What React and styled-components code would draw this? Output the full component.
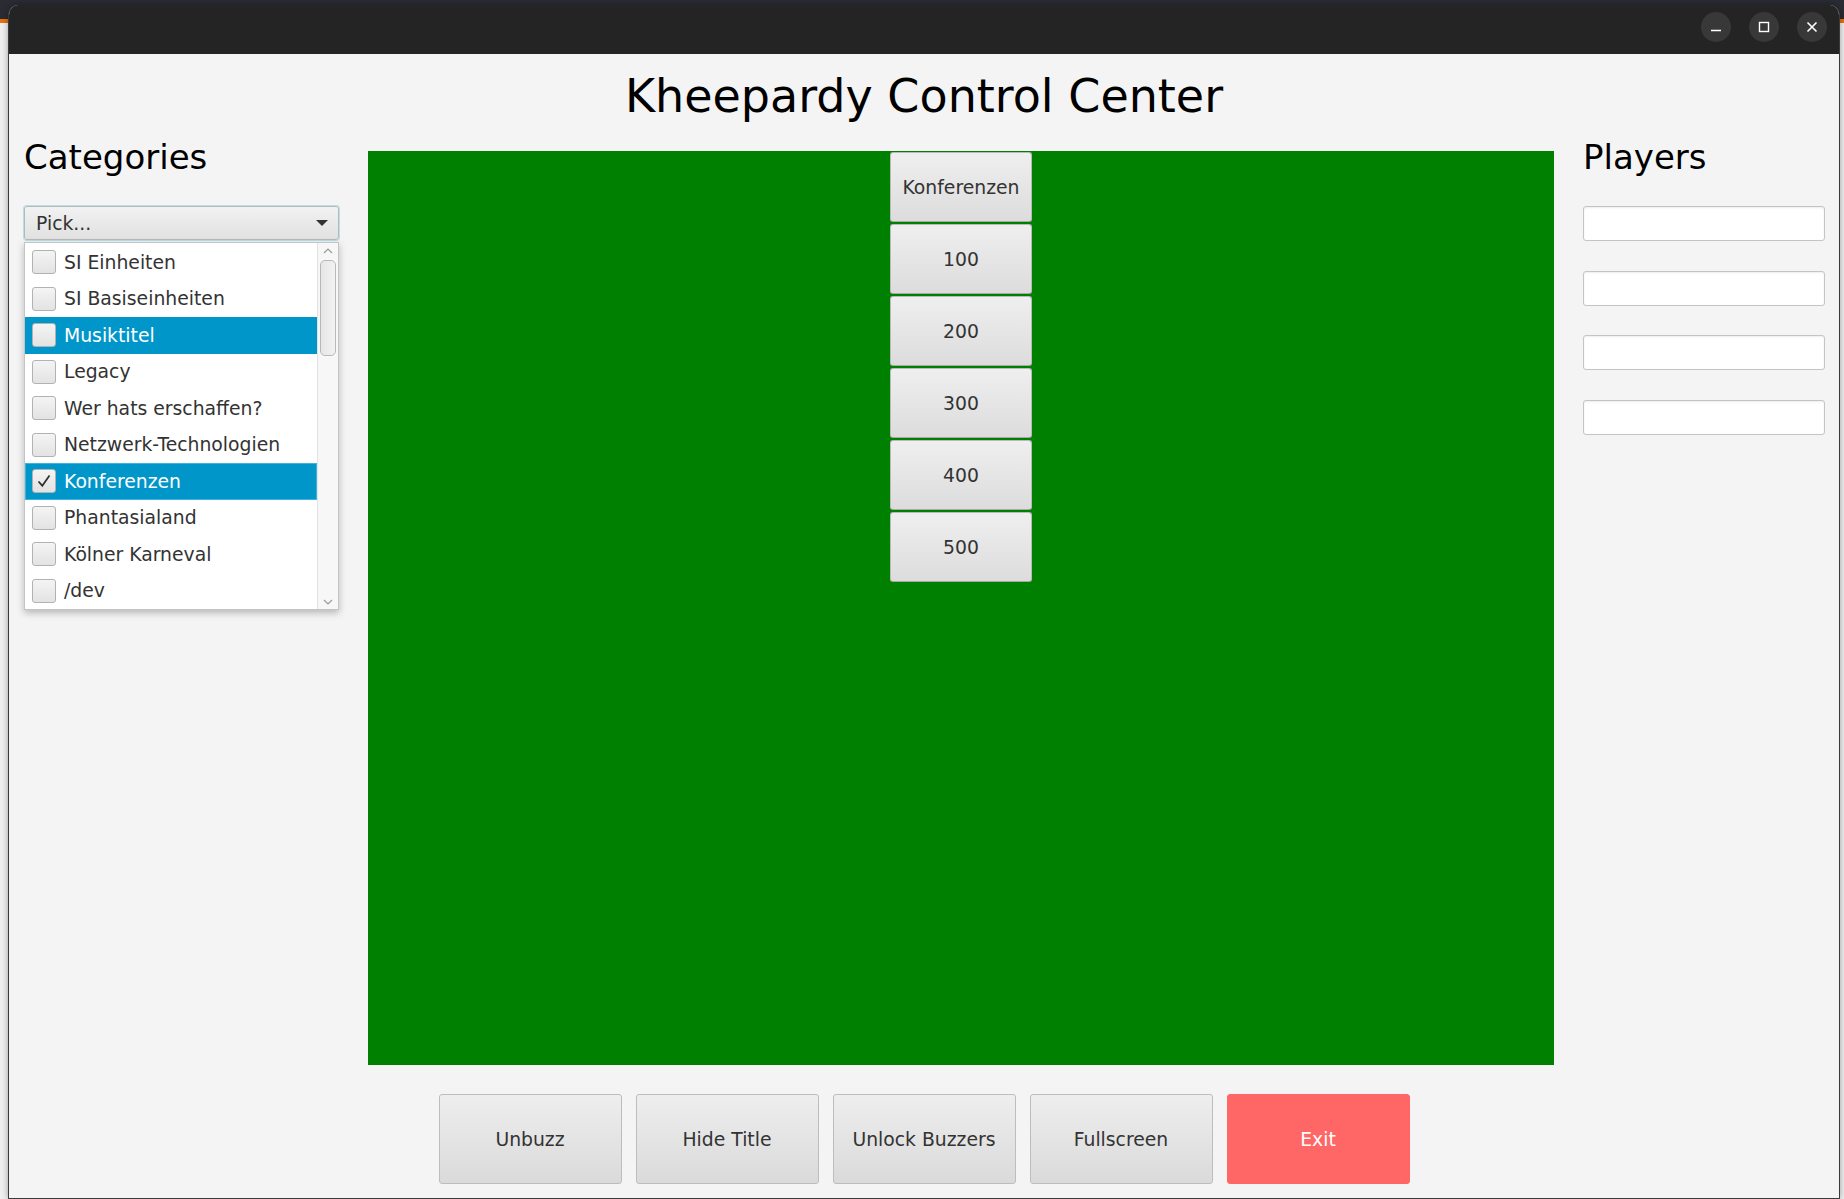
import React from "react";
import styled, { createGlobalStyle } from "styled-components";

const categories = [
    { name: "SI Einheiten" },
    { name: "SI Basiseinheiten" },
    { name: "Musiktitel", selected: true },
    { name: "Legacy" },
    { name: "Wer hats erschaffen?" },
    { name: "Netzwerk-Technologien" },
    { name: "Konferenzen", selected: true, checked: true, focused: true },
    { name: "Phantasialand" },
    { name: "Kölner Karneval" },
    { name: "/dev" },
];

const values = ["Konferenzen", "100", "200", "300", "400", "500"];
const actions = ["Unbuzz", "Hide Title", "Unlock Buzzers", "Fullscreen", "Exit"];

export default function App() {
    return (
        <>
            <GlobalStyle />
            <Window>
                <TitleBar>
                    <WinButton>
                        <svg width="14" height="14" viewBox="0 0 14 14">
                            <path d="M2 10.5h10" stroke="#fff" strokeWidth="1.6" />
                        </svg>
                    </WinButton>
                    <WinButton>
                        <svg width="14" height="14" viewBox="0 0 14 14">
                            <rect x="2.5" y="2.5" width="9" height="9" fill="none" stroke="#fff" strokeWidth="1.4" />
                        </svg>
                    </WinButton>
                    <WinButton>
                        <svg width="14" height="14" viewBox="0 0 14 14">
                            <path d="M2.5 2.5l9 9M11.5 2.5l-9 9" stroke="#fff" strokeWidth="1.6" />
                        </svg>
                    </WinButton>
                </TitleBar>
                <Content>
                    <Title>Kheepardy Control Center</Title>
                    <Body>
                        <Side>
                            <Heading>Categories</Heading>
                            <Combo>
                                <span>Pick...</span>
                                <Arrow />
                            </Combo>
                            <Dropdown>
                                <List>
                                    {categories.map((c) => (
                                        <Row key={c.name} selected={c.selected} focused={c.focused}>
                                            <Check>
                                                {c.checked && (
                                                    <svg width="18" height="18" viewBox="0 0 18 18">
                                                        <path
                                                            d="M3.5 9.5l3.8 4.2L14.5 3.5"
                                                            fill="none"
                                                            stroke="#333"
                                                            strokeWidth="1.8"
                                                        />
                                                    </svg>
                                                )}
                                            </Check>
                                            {c.name}
                                        </Row>
                                    ))}
                                </List>
                                <ScrollBar>
                                    <svg width="12" height="8" viewBox="0 0 12 8">
                                        <path d="M2 6l4-4 4 4" fill="none" stroke="#9a9a9a" strokeWidth="1.2" />
                                    </svg>
                                    <Thumb />
                                    <Track />
                                    <svg width="12" height="8" viewBox="0 0 12 8">
                                        <path d="M2 2l4 4 4-4" fill="none" stroke="#9a9a9a" strokeWidth="1.2" />
                                    </svg>
                                </ScrollBar>
                            </Dropdown>
                        </Side>
                        <Board>
                            <BoardColumn>
                                {values.map((v) => (
                                    <Tile key={v}>{v}</Tile>
                                ))}
                            </BoardColumn>
                        </Board>
                        <Players>
                            <Heading>Players</Heading>
                            <PlayerList>
                                <PlayerInput />
                                <PlayerInput />
                                <PlayerInput />
                                <PlayerInput />
                            </PlayerList>
                        </Players>
                    </Body>
                    <Footer>
                        {actions.map((a) => (
                            <ActionButton key={a} danger={a === "Exit"}>
                                {a}
                            </ActionButton>
                        ))}
                    </Footer>
                </Content>
            </Window>
        </>
    );
}

const GlobalStyle = createGlobalStyle`
    html, body {
        margin: 0;
        padding: 0;
    }
    body {
        width: 1844px;
        height: 1199px;
        overflow: hidden;
        font-family: "DejaVu Sans", "Liberation Sans", sans-serif;
        background: linear-gradient(
            #2b2b33 0 19px,
            #e5720f 19px 23px,
            #efefef 23px
        );
    }
`;

const Window = styled.div`
    margin: 5px 0 0 8px;
    width: 1832px;
    height: 1194px;
    display: flex;
    flex-direction: column;
    box-sizing: border-box;
    border: 1px solid #3a3a3a;
    border-top: none;
    border-radius: 10px 10px 0 0;
    overflow: hidden;
    background: #f4f4f4;
    box-shadow: 0 0 6px rgba(0, 0, 0, 0.35);
`;

const TitleBar = styled.div`
    height: 49px;
    flex: none;
    box-sizing: border-box;
    background: #242424;
    display: flex;
    justify-content: flex-end;
    align-items: flex-start;
    gap: 18px;
    padding: 7px 12px 0 0;
`;

const WinButton = styled.div`
    width: 30px;
    height: 30px;
    border-radius: 50%;
    background: #383838;
    display: flex;
    align-items: center;
    justify-content: center;
`;

const Content = styled.div`
    flex: 1;
    display: flex;
    flex-direction: column;
`;

const Title = styled.h1`
    margin: 15px 0 0;
    text-align: center;
    font-size: 46px;
    line-height: 54px;
    font-weight: normal;
    color: #000;
`;

const Body = styled.div`
    margin-top: 11px;
    display: flex;
    align-items: flex-start;
    padding: 0 14px 0 15px;
`;

const Side = styled.div`
    width: 315px;
    flex: none;
    display: flex;
    flex-direction: column;
`;

const Heading = styled.h2`
    margin: 3px 0 0;
    font-size: 34px;
    line-height: 40px;
    font-weight: normal;
    color: #000;
`;

const Combo = styled.div`
    margin-top: 29px;
    height: 34px;
    box-sizing: border-box;
    border: 1px solid #b8b8b8;
    border-radius: 3px;
    background: linear-gradient(#f2f2f2, #e1e1e1);
    box-shadow: 0 0 0 1px rgba(3, 158, 211, 0.25);
    display: flex;
    align-items: center;
    justify-content: space-between;
    padding: 0 10px 0 11px;
    font-size: 18.8px;
    color: #333;
`;

const Arrow = styled.div`
    width: 0;
    height: 0;
    border-left: 6px solid transparent;
    border-right: 6px solid transparent;
    border-top: 6px solid #333;
`;

const Dropdown = styled.div`
    margin-top: 2px;
    height: 368px;
    box-sizing: border-box;
    border: 1px solid #c4c4c4;
    background: #fff;
    box-shadow: 0 3px 7px rgba(0, 0, 0, 0.25);
    display: flex;
`;

const List = styled.div`
    flex: 1;
    display: flex;
    flex-direction: column;
    padding-top: 1px;
`;

const Row = styled.div`
    height: 36.5px;
    box-sizing: border-box;
    display: flex;
    align-items: center;
    gap: 8px;
    padding-left: 6px;
    font-size: 18.8px;
    color: ${(p) => (p.selected ? "#fff" : "#333")};
    background: ${(p) => (p.selected ? "#0096c9" : "#fff")};
    border: 1px solid ${(p) => (p.focused ? "#3fb3dd" : "transparent")};
`;

const Check = styled.div`
    width: 24px;
    height: 24px;
    box-sizing: border-box;
    border: 1px solid #b2b2b2;
    border-radius: 3px;
    background: linear-gradient(#f4f4f4, #e3e3e3);
    display: flex;
    align-items: center;
    justify-content: center;
`;

const ScrollBar = styled.div`
    width: 21px;
    flex: none;
    box-sizing: border-box;
    border-left: 1px solid #e2e2e2;
    background: #f7f7f7;
    display: flex;
    flex-direction: column;
    align-items: center;
    padding: 4px 0 3px;
    gap: 5px;
`;

const Thumb = styled.div`
    width: 16px;
    height: 96px;
    box-sizing: border-box;
    border: 1px solid #b8b8b8;
    border-radius: 5px;
    background: linear-gradient(90deg, #e6e6e6, #f2f2f2);
`;

const Track = styled.div`
    flex: 1;
`;

const Board = styled.div`
    flex: 1;
    margin: 17px 29px 0 29px;
    height: 914px;
    background: #008000;
    display: flex;
    justify-content: center;
`;

const BoardColumn = styled.div`
    display: flex;
    flex-direction: column;
    gap: 2px;
    margin-top: 1px;
`;

const Tile = styled.div`
    width: 142px;
    height: 70px;
    box-sizing: border-box;
    border: 1px solid #b9b9b9;
    border-bottom-color: #a8a8a8;
    border-radius: 3px;
    background: linear-gradient(#efefef, #dcdcdc);
    display: flex;
    align-items: center;
    justify-content: center;
    font-size: 18.8px;
    color: #333;
`;

const Players = styled.div`
    width: 242px;
    flex: none;
    display: flex;
    flex-direction: column;
`;

const PlayerList = styled.div`
    margin-top: 29px;
    display: flex;
    flex-direction: column;
    gap: 29.7px;
`;

const PlayerInput = styled.div`
    height: 35px;
    box-sizing: border-box;
    border: 1px solid #c4c4c4;
    border-radius: 3px;
    background: #fff;
    box-shadow: inset 0 1px 2px rgba(0, 0, 0, 0.08);
`;

const Footer = styled.div`
    margin-top: 29px;
    display: flex;
    justify-content: center;
    gap: 14px;
`;

const ActionButton = styled.div`
    width: 183px;
    height: 90px;
    box-sizing: border-box;
    border: 1px solid ${(p) => (p.danger ? "#ff6666" : "#bdbdbd")};
    border-radius: 3px;
    background: ${(p) => (p.danger ? "#ff6666" : "linear-gradient(#eeeeee, #dadada)")};
    display: flex;
    align-items: center;
    justify-content: center;
    font-size: 18.8px;
    color: ${(p) => (p.danger ? "#fff" : "#333")};
`;
